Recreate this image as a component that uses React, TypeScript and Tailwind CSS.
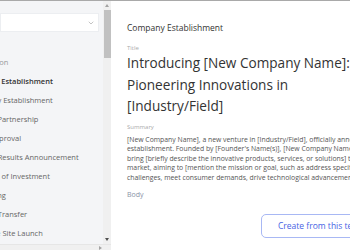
import { ChevronDown } from 'lucide-react';

const items = [
  { label: 'Introduction', tone: 'header' },
  { label: 'Company Establishment', tone: 'active' },
  { label: 'Subsidiary Establishment', tone: 'item' },
  { label: 'Strategic Partnership', tone: 'item' },
  { label: 'Patent Approval', tone: 'item' },
  { label: 'Financial Results Announcement', tone: 'item' },
  { label: 'Attraction of Investment', tone: 'item' },
  { label: 'Fundraising', tone: 'item' },
  { label: 'Business Transfer', tone: 'item' },
  { label: 'Corporate Site Launch', tone: 'item' },
];

function Sidebar() {
  return (
    <div className="flex h-[249px] w-[111px] shrink-0 flex-col bg-[#f4f5f7]">
      <div className="flex h-[243px]">
        <div className="w-[103px] overflow-hidden pt-[12px]">
          <div className="flex h-[19px] w-[99px] items-center justify-end border border-[#eceef1] bg-white pr-[3px] text-[#888]">
            <ChevronDown size={8} strokeWidth={1.5} />
          </div>
          <div className="mt-[21px]">
            {items.map((it) => (
              <div
                key={it.label}
                className={`-ml-[35px] flex h-[19px] items-center whitespace-nowrap text-[7.5px] ${
                  it.tone === 'active'
                    ? 'font-semibold text-[#333]'
                    : it.tone === 'header'
                      ? 'text-[#999]'
                      : 'text-[#666]'
                }`}
              >
                {it.label}
              </div>
            ))}
          </div>
        </div>
        <div className="flex w-[8px] flex-col items-center bg-[#f0f0f0]">
          <div className="mt-[3px] h-0 w-0 border-x-[2px] border-b-[3px] border-x-transparent border-b-[#a3a3a3]" />
          <div className="mt-[3px] h-[48px] w-[7px] bg-[#c1c1c1]" />
          <div className="flex-1" />
          <div className="mb-[3px] h-0 w-0 border-x-[2px] border-t-[3px] border-x-transparent border-t-[#505050]" />
        </div>
      </div>
      <div className="flex h-[6px] items-center border-t border-[#e6e6e6] bg-[#f0f0f0]">
        <div className="ml-[99px] h-0 w-0 border-y-[2px] border-l-[3px] border-y-transparent border-l-[#a3a3a3]" />
      </div>
    </div>
  );
}

export default function App() {
  return (
    <div
      className="flex h-[250px] w-[350px] overflow-hidden border-t border-[#a9a9a9] bg-white"
      style={{ fontFamily: '"Open Sans", "Noto Sans", sans-serif' }}
    >
      <Sidebar />
      <div className="min-w-0 flex-1 overflow-hidden pl-[16px] pt-[20px]">
        <div className="text-[8.5px] leading-[13px] text-[#333]">Company Establishment</div>
        <div className="mt-[10px] text-[6px] leading-[8px] text-[#aaa]">Title</div>
        <div className="whitespace-nowrap text-[13.6px] leading-[21.5px] text-[#333]">
          <div>Introducing [New Company Name]:</div>
          <div>Pioneering Innovations in</div>
          <div>[Industry/Field]</div>
        </div>
        <div className="mt-[6px] text-[6px] leading-[8px] text-[#aaa]">Summary</div>
        <div className="mt-[4px] text-[6.85px] leading-[9.5px] text-[#555]">
          <div className="whitespace-nowrap">[New Company Name], a new venture in [Industry/Field], officially announces its</div>
          <div className="whitespace-nowrap">establishment. Founded by [Founder's Name(s)], [New Company Name] aims to</div>
          <div className="whitespace-nowrap">bring [briefly describe the innovative products, services, or solutions] to the</div>
          <div className="whitespace-nowrap">market, aiming to [mention the mission or goal, such as address specific industry</div>
          <div className="whitespace-nowrap">challenges, meet consumer demands, drive technological advancements, etc.].</div>
        </div>
        <div className="mt-[8px] text-[7px] leading-[10px] text-[#8a93a6]">Body</div>
        <div className="mt-[14px] ml-[134px] flex h-[24px] w-[140px] items-center whitespace-nowrap rounded-[5px] border border-[#a8b8f4] pl-[16px] text-[8.5px] text-[#4763e4]">
          Create from this template
        </div>
      </div>
    </div>
  );
}
